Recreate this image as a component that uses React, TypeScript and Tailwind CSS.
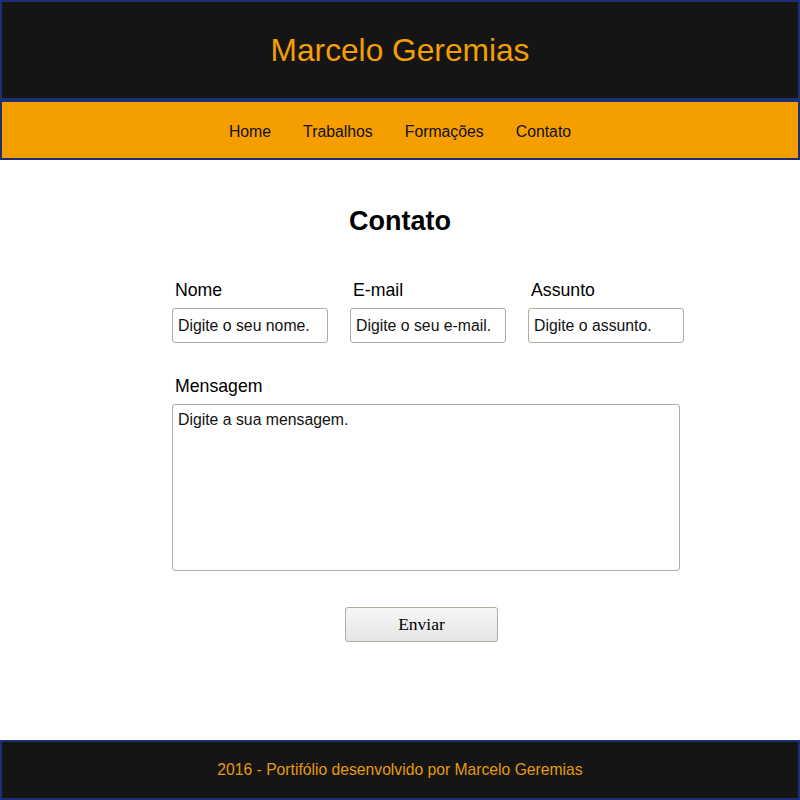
import React from "react";

const links = ["Home", "Trabalhos", "Formações", "Contato"];

const fields = [
  { label: "Nome", placeholder: "Digite o seu nome." },
  { label: "E-mail", placeholder: "Digite o seu e-mail." },
  { label: "Assunto", placeholder: "Digite o assunto." },
];

const App: React.FC = () => {
  return (
    <div className="min-h-screen flex flex-col bg-white font-['Liberation_Sans',Arial,sans-serif]">
      {/* Header */}
      <header className="h-[100px] bg-[#151515] border-2 border-[#1d2f72] flex items-center justify-center">
        <h1 className="text-[31.7px] leading-[37px] text-[#f49e00]">Marcelo Geremias</h1>
      </header>

      {/* Nav */}
      <nav className="h-[60px] pt-[4px] bg-[#f59e00] border-2 border-[#1d2f72] flex items-center justify-center gap-8">
        {links.map((l) => (
          <a key={l} href="#" className="text-[15.8px] text-[#111]">
            {l}
          </a>
        ))}
      </nav>

      {/* Contact form */}
      <main className="flex-1 pt-[46px]">
        <h2 className="text-center text-[27px] leading-[31px] font-bold text-black">Contato</h2>

        <form className="ml-[172px] mt-[43px] w-[512px]">
          <div className="flex gap-[22px]">
            {fields.map((f) => (
              <div key={f.label} className="flex flex-col">
                <label className="pl-[3px] text-[17.7px] leading-[21px] text-black">{f.label}</label>
                <input
                  type="text"
                  placeholder={f.placeholder}
                  className="mt-[7px] w-[156px] h-[35px] px-[5px] border border-[#b3ad9f] rounded-[3px] text-[15.8px] text-black placeholder:text-[#111] outline-none"
                />
              </div>
            ))}
          </div>

          <div className="mt-[33px] flex flex-col">
            <label className="pl-[3px] text-[17.7px] leading-[21px] text-black">Mensagem</label>
            <textarea
              placeholder="Digite a sua mensagem."
              className="mt-[7px] w-[508px] h-[167px] px-[5px] pt-[6px] border border-[#b3ad9f] rounded-[3px] text-[15.8px] leading-[18px] text-black placeholder:text-[#111] resize-none outline-none"
            />
          </div>

          <button
            type="button"
            className="mt-[36px] ml-[173px] w-[153px] h-[35px] border border-[#b3ad9f] rounded-[3px] bg-gradient-to-b from-[#f7f7f7] to-[#e5e5e5] font-['Liberation_Serif',serif] text-[17.5px] text-black"
          >
            Enviar
          </button>
        </form>
      </main>

      {/* Footer */}
      <footer className="h-[60px] bg-[#151515] border-2 border-[#1d2f72] flex items-center justify-center">
        <p className="text-[15.7px] text-[#e39a12]">2016 - Portifólio desenvolvido por Marcelo Geremias</p>
      </footer>
    </div>
  );
};

export default App;
